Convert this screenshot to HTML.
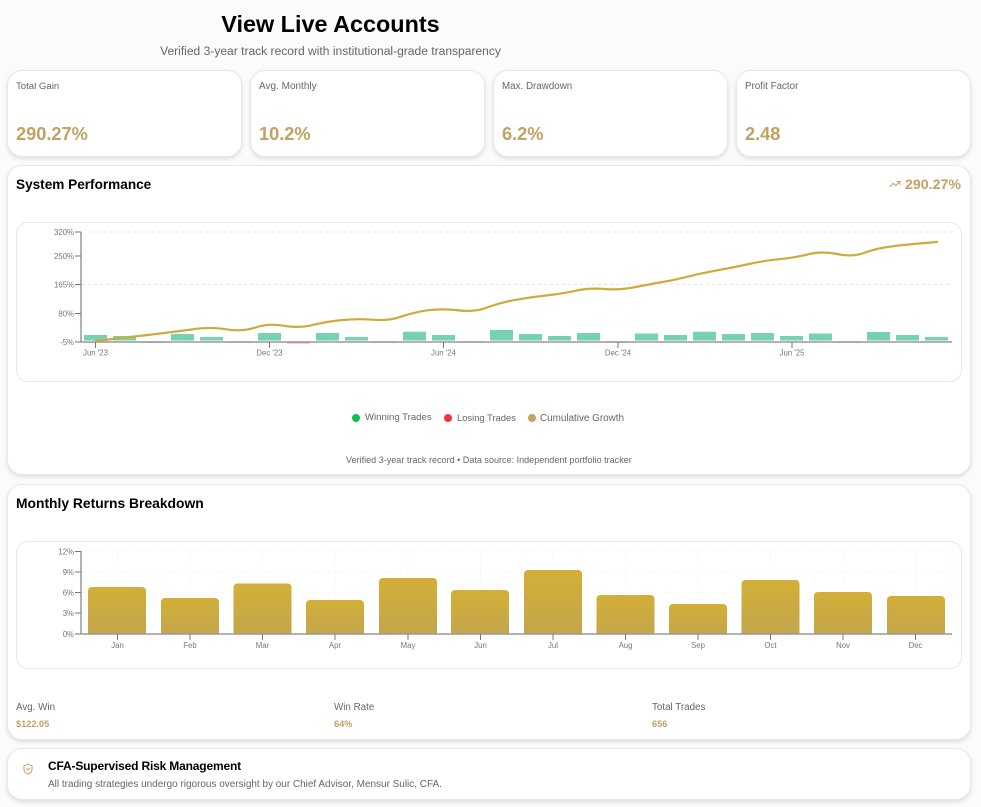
<!DOCTYPE html>
<html lang="en"><head><meta charset="utf-8"><title>View Live Accounts</title>
<style>
html,body{margin:0;padding:0;background:#fbfbfb}
body{position:relative;width:981px;height:807px;overflow:hidden;font-family:"Liberation Sans",sans-serif;color:#666}
.c{position:absolute;box-sizing:border-box;background:#fff;border:1px solid #e8e8e8;border-radius:15px;box-shadow:0 2px 4px rgba(0,0,0,.12)}
.b{position:absolute;box-sizing:border-box;background:#fff;border:1px solid #e8e8e8;border-radius:12px}
.t{position:absolute;white-space:nowrap;line-height:16px}
.l{font-size:9.8px;color:#666}
.v{font-size:18.2px;font-weight:700;color:#c4a063;line-height:24px}
.h{font-size:13.6px;font-weight:700;color:#000}
.s{font-size:9.2px;font-weight:700;color:#c4a063}
.d{position:absolute;width:8px;height:8px;border-radius:50%}
svg{position:absolute;left:0;top:0;overflow:visible}
svg text{font-family:"Liberation Sans",sans-serif;font-size:7.8px;fill:#777}
</style></head><body>

<div class="t" style="left:0;width:661px;text-align:center;top:8px;font-size:23.4px;font-weight:700;line-height:32px;color:#000">View Live Accounts</div>
<div class="t" style="left:0;width:661px;text-align:center;top:43px;font-size:12.06px;color:#666">Verified 3-year track record with institutional-grade transparency</div>

<div class="c" style="left:7px;top:70px;width:235px;height:87px"></div>
<div class="c" style="left:250px;top:70px;width:235px;height:87px"></div>
<div class="c" style="left:493px;top:70px;width:235px;height:87px"></div>
<div class="c" style="left:736px;top:70px;width:235px;height:87px"></div>
<div class="t l" style="left:16px;top:79px;font-size:9.6px">Total Gain</div>
<div class="t l" style="left:259px;top:79px;font-size:10px">Avg. Monthly</div>
<div class="t l" style="left:502px;top:79px">Max. Drawdown</div>
<div class="t l" style="left:745px;top:79px">Profit Factor</div>
<div class="t v" style="left:16px;top:122px">290.27%</div>
<div class="t v" style="left:259px;top:122px">10.2%</div>
<div class="t v" style="left:502px;top:122px">6.2%</div>
<div class="t v" style="left:745px;top:122px">2.48</div>

<div class="c" style="left:7px;top:165px;width:964px;height:310px"></div>
<div class="t h" style="left:16px;top:177px">System Performance</div>
<div class="t" style="left:905px;top:177px;font-size:14.2px;font-weight:700;color:#c4a063">290.27%</div>
<svg style="left:889px;top:178px" width="12" height="12" viewBox="0 0 24 24" fill="none" stroke="#c4a063" stroke-width="2" stroke-linecap="round" stroke-linejoin="round"><polyline points="22 7 13.5 15.5 8.5 10.5 2 17"/><polyline points="16 7 22 7 22 13"/></svg>

<div class="b" style="left:16px;top:222px;width:946px;height:160px"></div>
<svg width="981" height="807">
<g stroke="#e6e6e6" stroke-width="1" stroke-dasharray="3 3" fill="none"><path d="M92 232H952M82 284.5H952"/></g>
<g fill="#76d3b0">
<rect x="84" y="335" width="23" height="5.5"/><rect x="113" y="336" width="23" height="4.5"/><rect x="171" y="334" width="23" height="6.5"/><rect x="200" y="337" width="23" height="3.5"/><rect x="258" y="333" width="23" height="7.5"/><rect x="316" y="333" width="23" height="7.5"/><rect x="345" y="337" width="23" height="3.5"/><rect x="403" y="331.7" width="23" height="8.8"/><rect x="432" y="335" width="23" height="5.5"/><rect x="490" y="330" width="23" height="10.5"/><rect x="519" y="334" width="23" height="6.5"/><rect x="548" y="336" width="23" height="4.5"/><rect x="577" y="333" width="23" height="7.5"/><rect x="635" y="333.5" width="23" height="7"/><rect x="664" y="335" width="23" height="5.5"/><rect x="693" y="331.7" width="23" height="8.8"/><rect x="722" y="334" width="23" height="6.5"/><rect x="751" y="333" width="23" height="7.5"/><rect x="780" y="336" width="23" height="4.5"/><rect x="809" y="333.5" width="23" height="7"/><rect x="867" y="332" width="23" height="8.5"/><rect x="896" y="335" width="23" height="5.5"/><rect x="925" y="337" width="23" height="3.5"/>
</g>
<g fill="#e8a0a8"><rect x="142" y="342" width="23" height="1"/><rect x="229" y="342" width="23" height="1"/><rect x="287" y="342" width="23" height="1.5"/><rect x="374" y="342" width="23" height="1"/><rect x="461" y="342" width="23" height="1"/><rect x="606" y="342" width="23" height="1"/><rect x="838" y="342" width="23" height="1"/></g>
<g stroke="#999" fill="none"><path d="M81 232V342" stroke-width="1.5"/><path d="M75 232H81M75 256H81M75 284.5H81M75 313.5H81M75 342H81" stroke="#777"/><path d="M81 342H952" stroke-width="1.5"/><path d="M95.5 342V348M269.5 342V348M443.5 342V348M618 342V348M792 342V348" stroke="#777"/></g>
<path d="M95.7 341L114.3 338.9Q133 336.7 153 334.35Q173 332 191.5 329.5Q210 326.5 225.85 329.2Q241.7 332 254.85 327.7Q268 323 284 325.8Q300 328.5 315 324.4Q330 321 343.35 320Q356.7 318.5 372.35 319.7Q388 321.2 400.5 316.85Q413 312.5 428 310.2Q443 308.5 459 310.4Q475 312.5 488.35 307Q501.7 302.2 515.85 299.8Q530 297.3 545 295.65Q560 294 573.35 291.35Q586.7 287.8 603.35 288.9Q620 290.5 638.35 286.5Q656.7 283 665.35 281.5Q674 280 687.5 276.65Q701 273.3 717.5 270.3Q734 267.3 749 264Q764 260.7 779 259.2Q794 257.7 807.5 254.5Q821 250.8 836.85 254Q852.7 257.5 865.2 252.5Q877.7 248 890.85 246.5Q904 244.7 920.5 243.35L937 242" fill="none" stroke="#cfab3c" stroke-width="2.2" stroke-linecap="round"/>
<g text-anchor="end"><text x="74" y="235">320%</text><text x="74" y="259">250%</text><text x="74" y="287.5">165%</text><text x="74" y="316.5">80%</text><text x="74" y="345">-5%</text></g>
<g text-anchor="middle"><text x="95.5" y="355.5">Jun '23</text><text x="269.5" y="355.5">Dec '23</text><text x="443.5" y="355.5">Jun '24</text><text x="618" y="355.5">Dec '24</text><text x="792" y="355.5">Jun '25</text></g>
</svg>

<div class="d" style="left:352px;top:414px;background:#0bc14e"></div>
<div class="t" style="left:365px;top:410px;font-size:9.6px;color:#666">Winning Trades</div>
<div class="d" style="left:444px;top:414px;background:#f0323f"></div>
<div class="t" style="left:457px;top:410px;font-size:9.4px;color:#666">Losing Trades</div>
<div class="d" style="left:528px;top:414px;background:#c4a063"></div>
<div class="t" style="left:540px;top:411px;font-size:9.9px;color:#666">Cumulative Growth</div>
<div class="t" style="left:346px;top:452px;font-size:9.05px;color:#666">Verified 3-year track record • Data source: Independent portfolio tracker</div>

<div class="c" style="left:7px;top:484px;width:964px;height:256px"></div>
<div class="t" style="left:16px;top:495px;font-size:13.85px;font-weight:700;color:#000">Monthly Returns Breakdown</div>
<div class="b" style="left:16px;top:541px;width:946px;height:128px"></div>
<svg width="981" height="807">
<defs><linearGradient id="g" x1="0" y1="0" x2="0" y2="1"><stop offset="0" stop-color="#d3af37"/><stop offset="1" stop-color="#c3a64c"/></linearGradient></defs>
<g stroke="#f5f5f5" stroke-width="1" stroke-dasharray="3 3" fill="none"><path d="M82 551H952M82 572H952M82 592.5H952M82 613H952M117.5 551V634M190 551V634M262.5 551V634M335 551V634M408 551V634M480.5 551V634M553 551V634M625.5 551V634M698 551V634M770.5 551V634M843 551V634M915.5 551V634M952 551V634"/></g>
<g fill="url(#g)">
<path d="M88 634V591a4 4 0 0 1 4-4H142a4 4 0 0 1 4 4V634Z"/><path d="M161 634V602a4 4 0 0 1 4-4H215a4 4 0 0 1 4 4V634Z"/><path d="M233.5 634V587.5a4 4 0 0 1 4-4H287.5a4 4 0 0 1 4 4V634Z"/><path d="M306 634V604a4 4 0 0 1 4-4H360a4 4 0 0 1 4 4V634Z"/><path d="M379 634V582a4 4 0 0 1 4-4H433a4 4 0 0 1 4 4V634Z"/><path d="M451 634V594a4 4 0 0 1 4-4H505a4 4 0 0 1 4 4V634Z"/><path d="M524 634V574a4 4 0 0 1 4-4H578a4 4 0 0 1 4 4V634Z"/><path d="M596.5 634V599a4 4 0 0 1 4-4H650.5a4 4 0 0 1 4 4V634Z"/><path d="M669 634V608a4 4 0 0 1 4-4H723a4 4 0 0 1 4 4V634Z"/><path d="M741.5 634V584a4 4 0 0 1 4-4H795.5a4 4 0 0 1 4 4V634Z"/><path d="M814 634V596a4 4 0 0 1 4-4H868a4 4 0 0 1 4 4V634Z"/><path d="M887 634V600a4 4 0 0 1 4-4H941a4 4 0 0 1 4 4V634Z"/>
</g>
<g stroke="#999" fill="none"><path d="M81 551V634" stroke-width="1.5"/><path d="M75 551.5H81M75 572H81M75 592.5H81M75 613H81M75 634H81" stroke="#777"/><path d="M81 634H952" stroke-width="1.5"/><path d="M117.5 634V640M190 634V640M262.5 634V640M335 634V640M408 634V640M480.5 634V640M553 634V640M625.5 634V640M698 634V640M770.5 634V640M843 634V640M915.5 634V640" stroke="#777"/></g>
<g text-anchor="end"><text x="74" y="554.5">12%</text><text x="74" y="575">9%</text><text x="74" y="595.5">6%</text><text x="74" y="616">3%</text><text x="74" y="637">0%</text></g>
<g text-anchor="middle"><text x="117.5" y="648">Jan</text><text x="190" y="648">Feb</text><text x="262.5" y="648">Mar</text><text x="335" y="648">Apr</text><text x="408" y="648">May</text><text x="480.5" y="648">Jun</text><text x="553" y="648">Jul</text><text x="625.5" y="648">Aug</text><text x="698" y="648">Sep</text><text x="770.5" y="648">Oct</text><text x="843" y="648">Nov</text><text x="915.5" y="648">Dec</text></g>
</svg>

<div class="t l" style="left:16px;top:700px">Avg. Win</div>
<div class="t s" style="left:16px;top:716px">$122.05</div>
<div class="t l" style="left:334px;top:700px">Win Rate</div>
<div class="t s" style="left:334px;top:716px">64%</div>
<div class="t l" style="left:652px;top:700px">Total Trades</div>
<div class="t s" style="left:652px;top:716px">656</div>

<div class="c" style="left:7px;top:748px;width:964px;height:52px"></div>
<svg style="left:22px;top:763px" width="12" height="12" viewBox="0 0 24 24" fill="none" stroke="#c4a063" stroke-width="2" stroke-linecap="round" stroke-linejoin="round"><path d="M20 13c0 5-3.5 7.5-7.66 8.95a1 1 0 0 1-.67-.01C7.5 20.5 4 18 4 13V6a1 1 0 0 1 1-1c2 0 4.5-1.2 6.24-2.72a1.17 1.17 0 0 1 1.52 0C14.51 3.81 17 5 19 5a1 1 0 0 1 1 1z"/><path d="m9 12 2 2 4-4"/></svg>
<div class="t" style="left:48px;top:758px;font-size:12px;letter-spacing:-.17px;font-weight:700;color:#000">CFA-Supervised Risk Management</div>
<div class="t" style="left:48px;top:777px;font-size:9.97px;color:#666">All trading strategies undergo rigorous oversight by our Chief Advisor, Mensur Sulic, CFA.</div>
</body></html>
